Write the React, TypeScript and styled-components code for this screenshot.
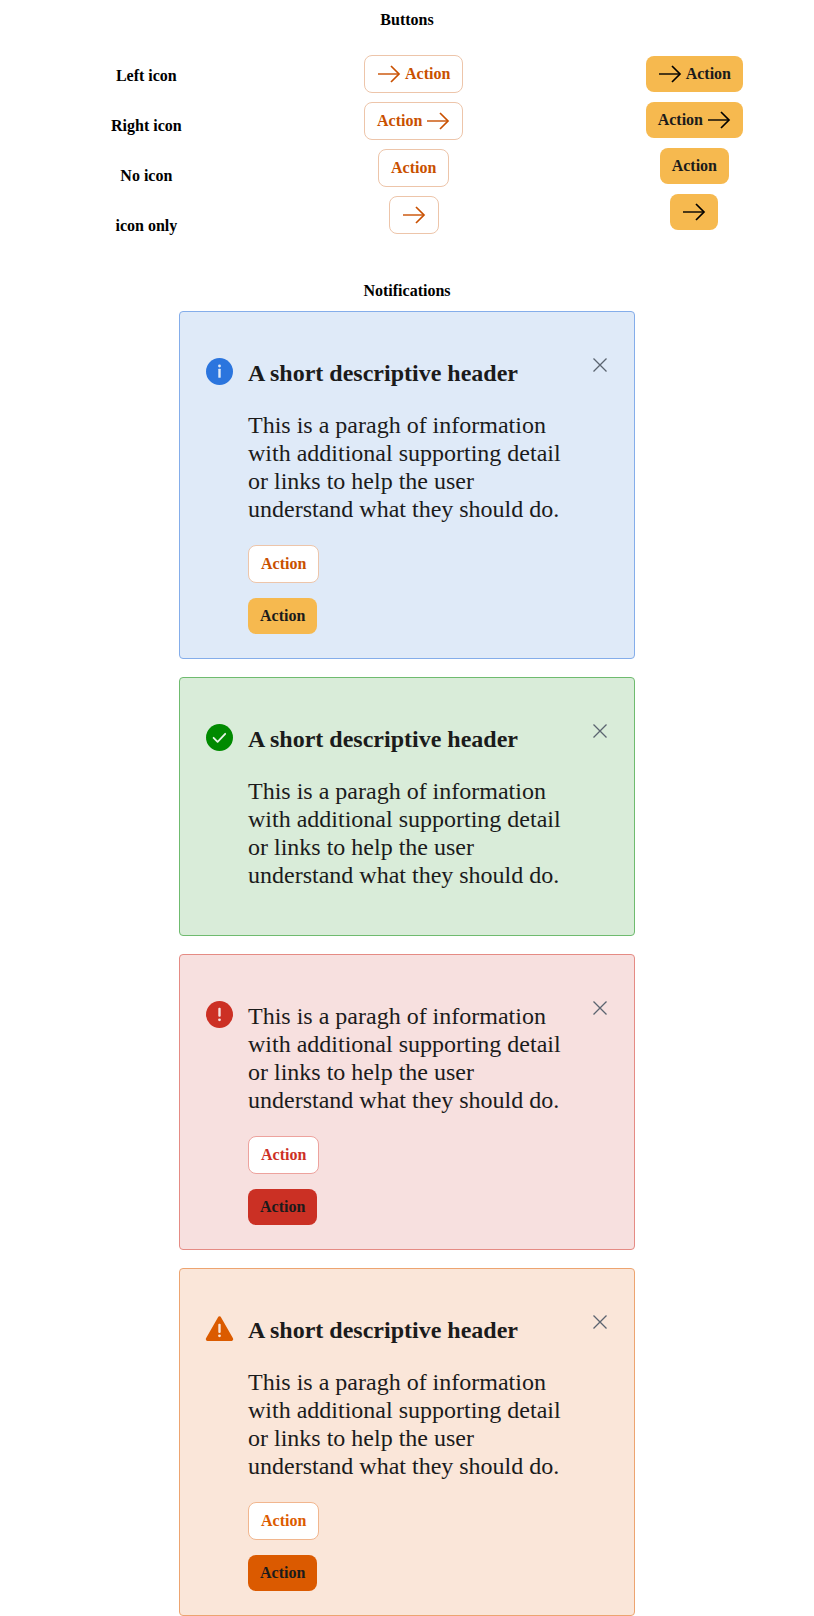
import React from "react";
import styled, { createGlobalStyle, css } from "styled-components";

const GlobalStyle = createGlobalStyle`
  *, *::before, *::after { box-sizing: border-box; }
  body {
    margin: 0;
    background: #fff;
    color: #000;
    font-family: "Liberation Serif", "Times New Roman", serif;
    font-size: 16px;
    line-height: 18px;
  }
`;

const Page = styled.main`
  display: flex;
  flex-direction: column;
`;

const SectionTitle = styled.h2`
  margin: 0;
  font-size: 16px;
  line-height: 18px;
  text-align: center;
`;

const ButtonSection = styled.section`
  padding-top: 11px;
`;

const ButtonColumns = styled.div`
  display: flex;
  justify-content: space-between;
  align-items: flex-start;
  padding: 26px 71px 0 111px;
`;

const LabelColumn = styled.div`
  display: flex;
  flex-direction: column;
  align-items: center;
  gap: 32px;
  padding-top: 12px;
`;

const RowLabel = styled.h3`
  margin: 0;
  font-size: 16px;
  line-height: 18px;
`;

const VariantColumn = styled.div<{ $top: number; $gap: number }>`
  display: flex;
  flex-direction: column;
  align-items: center;
  gap: ${(p) => p.$gap}px;
  padding-top: ${(p) => p.$top}px;
`;

type Tone = "brand" | "danger" | "warning";

const outlineTones: Record<Tone, { color: string; border: string }> = {
  brand: { color: "#c95000", border: "#edc5aa" },
  danger: { color: "#cd3026", border: "#eda29d" },
  warning: { color: "#dc5b00", border: "#f1b68e" },
};

const solidTones: Record<Tone, string> = {
  brand: "#f6b94f",
  danger: "#cb3024",
  warning: "#db5a00",
};

const ActionButton = styled.button<{ $tone: Tone; $solid?: boolean }>`
  display: inline-flex;
  align-items: center;
  gap: 4px;
  height: 36px;
  padding: 0 12px;
  border: 0;
  border-radius: 8px;
  font: bold 16px/18px "Liberation Serif", "Times New Roman", serif;
  cursor: pointer;
  ${(p) =>
    p.$solid
      ? css`
          background: ${solidTones[p.$tone]};
          color: #1b1b1b;
        `
      : css`
          height: 38px;
          border: 1px solid ${outlineTones[p.$tone].border};
          background: #fff;
          color: ${outlineTones[p.$tone].color};
        `}
`;

const ArrowSvg = styled.svg<{ $dark?: boolean }>`
  display: block;
  width: 24px;
  height: 24px;
  color: ${(p) => (p.$dark ? "#000" : "inherit")};
`;

const Arrow = ({ dark }: { dark?: boolean }) => (
  <ArrowSvg $dark={dark} viewBox="0 0 24 24" fill="none" stroke="currentColor" aria-hidden="true">
    <path d="M1 12h21" strokeWidth="1.4" />
    <path d="m14 4 8 8-8 8" strokeWidth="1.7" />
  </ArrowSvg>
);

const ButtonSet = ({ solid }: { solid?: boolean }) => (
  <VariantColumn $top={solid ? 1 : 0} $gap={solid ? 10 : 9}>
    <ActionButton type="button" $tone="brand" $solid={solid}>
      <Arrow dark={solid} />
      Action
    </ActionButton>
    <ActionButton type="button" $tone="brand" $solid={solid}>
      Action
      <Arrow dark={solid} />
    </ActionButton>
    <ActionButton type="button" $tone="brand" $solid={solid}>
      Action
    </ActionButton>
    <ActionButton type="button" $tone="brand" $solid={solid} aria-label="Action">
      <Arrow dark={solid} />
    </ActionButton>
  </VariantColumn>
);

const NotificationSection = styled.section`
  display: flex;
  flex-direction: column;
  align-items: center;
  padding-top: 47px;
`;

const NotificationList = styled.div`
  display: flex;
  flex-direction: column;
  gap: 18px;
  width: 100%;
  max-width: 456px;
  padding-top: 11px;
`;

type Kind = "info" | "success" | "error" | "warning";

const cardTones: Record<Kind, { background: string; border: string; icon: string }> = {
  info: { background: "#dfeaf8", border: "#84adea", icon: "#2b75de" },
  success: { background: "#d9ecd9", border: "#6fbb6f", icon: "#008a00" },
  error: { background: "#f7e0df", border: "#e58b84", icon: "#cc3024" },
  warning: { background: "#fae6d9", border: "#eda470", icon: "#db5b00" },
};

const Card = styled.article<{ $kind: Kind }>`
  display: flex;
  align-items: flex-start;
  padding: 46px 27px 24px 26px;
  border: 1px solid ${(p) => cardTones[p.$kind].border};
  border-radius: 4px;
  background: ${(p) => cardTones[p.$kind].background};
  color: #1b1b1b;
`;

const StatusSvg = styled.svg<{ $kind: Kind }>`
  flex: none;
  width: 27px;
  height: 27px;
  overflow: visible;
  color: ${(p) => cardTones[p.$kind].icon};
`;

const CardBody = styled.div`
  flex: 1;
  min-width: 0;
  padding: 1px 8px 0 15px;
`;

const CardTitle = styled.h3`
  margin: 0 0 24px;
  font-size: 24px;
  line-height: 28px;
`;

const CardText = styled.p`
  margin: 0;
  max-width: 320px;
  font-size: 24px;
  line-height: 28px;
`;

const CardActions = styled.div`
  display: flex;
  flex-direction: column;
  align-items: flex-start;
  gap: 15px;
  padding-top: 22px;
`;

const CardFooter = styled.div`
  height: 22px;
`;

const CloseButton = styled.button`
  display: flex;
  flex: none;
  padding: 0;
  border: 0;
  background: none;
  color: #5b6470;
  cursor: pointer;

  svg {
    width: 14px;
    height: 14px;
  }
`;

const StatusIcon = ({ kind }: { kind: Kind }) => (
  <StatusSvg $kind={kind} viewBox="0 0 27 27" fill="none" aria-hidden="true">
    {kind === "warning" ? (
      <>
        <path
          d="M13.5 3 25.5 24.2H1.5Z"
          fill="currentColor"
          stroke="currentColor"
          strokeWidth="3.4"
          strokeLinejoin="round"
        />
        <rect x="12.3" y="8.8" width="2.4" height="9.2" rx="1" fill="#fae6d9" />
        <circle cx="13.5" cy="20.8" r="1.4" fill="#fae6d9" />
      </>
    ) : (
      <circle cx="13.5" cy="13.5" r="13.5" fill="currentColor" />
    )}
    {kind === "info" && (
      <>
        <circle cx="13.5" cy="8" r="1.4" fill="#dfeaf8" />
        <rect x="12.3" y="10.8" width="2.4" height="9" rx=".5" fill="#dfeaf8" />
      </>
    )}
    {kind === "success" && (
      <path d="m7.6 13.8 4 4 7.6-8" stroke="#e6f4e6" strokeWidth="1.8" strokeLinecap="round" strokeLinejoin="round" />
    )}
    {kind === "error" && (
      <>
        <rect x="12.3" y="6.8" width="2.4" height="9" rx="1" fill="#f7e0df" />
        <circle cx="13.5" cy="18.8" r="1.4" fill="#f7e0df" />
      </>
    )}
  </StatusSvg>
);

interface NotificationProps {
  kind: Kind;
  title?: string;
  actionTone?: Tone;
}

const Notification = ({ kind, title, actionTone }: NotificationProps) => (
  <Card $kind={kind}>
    <StatusIcon kind={kind} />
    <CardBody>
      {title && <CardTitle>{title}</CardTitle>}
      <CardText>
        This is a paragh of information with additional supporting detail or links to help the user understand what they
        should do.
      </CardText>
      {actionTone ? (
        <CardActions>
          <ActionButton type="button" $tone={actionTone}>
            Action
          </ActionButton>
          <ActionButton type="button" $tone={actionTone} $solid>
            Action
          </ActionButton>
        </CardActions>
      ) : (
        <CardFooter />
      )}
    </CardBody>
    <CloseButton type="button" aria-label="Close">
      <svg viewBox="0 0 14 14" fill="none" stroke="currentColor" strokeWidth="1.3" aria-hidden="true">
        <path d="M.5.5l13 13M13.5.5l-13 13" />
      </svg>
    </CloseButton>
  </Card>
);

const HEADER = "A short descriptive header";

export default function App() {
  return (
    <Page>
      <GlobalStyle />
      <ButtonSection>
        <SectionTitle>Buttons</SectionTitle>
        <ButtonColumns>
          <LabelColumn>
            <RowLabel>Left icon</RowLabel>
            <RowLabel>Right icon</RowLabel>
            <RowLabel>No icon</RowLabel>
            <RowLabel>icon only</RowLabel>
          </LabelColumn>
          <ButtonSet />
          <ButtonSet solid />
        </ButtonColumns>
      </ButtonSection>
      <NotificationSection>
        <SectionTitle>Notifications</SectionTitle>
        <NotificationList>
          <Notification kind="info" title={HEADER} actionTone="brand" />
          <Notification kind="success" title={HEADER} />
          <Notification kind="error" actionTone="danger" />
          <Notification kind="warning" title={HEADER} actionTone="warning" />
        </NotificationList>
      </NotificationSection>
    </Page>
  );
}
